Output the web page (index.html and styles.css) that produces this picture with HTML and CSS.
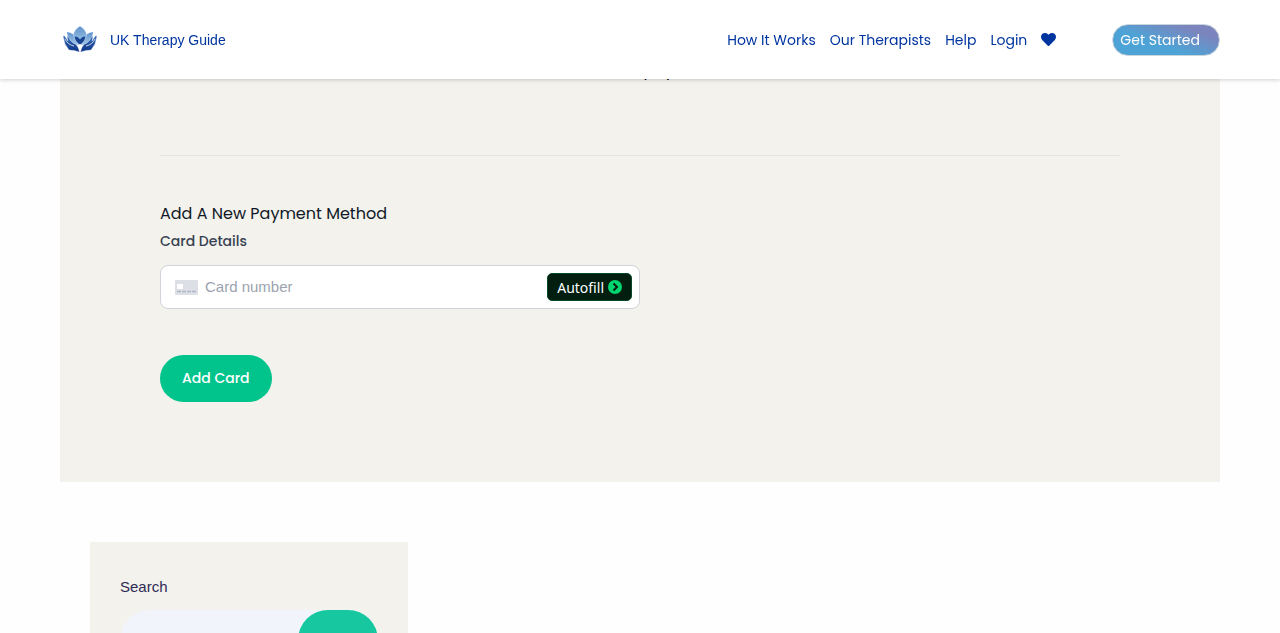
FILE: index.html
```html
<!DOCTYPE html>
<html lang="en">
  <head>
    <meta charset="UTF-8" />
    <meta name="viewport" content="width=device-width, initial-scale=1.0" />
    <title>UK Therapy Guide</title>
    <link rel="stylesheet" href="styles.css">
  </head>
  <body>
    <header class="header">
      <a href="#" class="brand">
        <svg class="logo" viewBox="0 0 36 28" aria-hidden="true">
          <defs>
            <linearGradient id="petal" x1="0" y1="0" x2="0" y2="1">
              <stop offset="0" stop-color="#5d92cc" />
              <stop offset="1" stop-color="#a3c9e8" />
            </linearGradient>
            <linearGradient id="hand" x1="0" y1="0" x2="0" y2="1">
              <stop offset="0" stop-color="#3f74bb" />
              <stop offset="1" stop-color="#0b3287" />
            </linearGradient>
          </defs>
          <path fill="url(#petal)" d="M5 6 Q12 7 15.500 13 L17.500 19 Q9 19 6 12z" />
          <path fill="url(#petal)" d="M31 6 Q24 7 20.500 13 L18.500 19 Q27 19 30 12z" />
          <path fill="url(#petal)" stroke="#fff" stroke-width=".4" d="M18 0 Q11.500 4 11.500 9 Q12 14 18 18 Q24 14 24.500 9 Q24.500 4 18 0z" />
          <path fill="#174391" d="M12.500 10.500 Q16 10.500 18 13.500 Q20 10.500 23.500 10.500 Q22.500 16 18 18.500 Q13.500 16 12.500 10.500z" />
          <path fill="url(#hand)" stroke="#fff" stroke-width=".3" d="M1 10 Q3 9 4 12 L6 15 L5 11 Q7 10 8 14 L11 17 Q16 18 17.500 26 Q12 24 7 24 Q5 21 3 18z" />
          <path fill="url(#hand)" stroke="#fff" stroke-width=".3" d="M35 10 Q33 9 32 12 L30 15 L31 11 Q29 10 28 14 L25 17 Q20 18 18.500 26 Q24 24 29 24 Q31 21 33 18z" />
          <path fill="none" stroke="#fff" stroke-width=".7" d="M3 13 Q6 19 12 20 M33 13 Q30 19 24 20" />
        </svg>
        <span>UK Therapy Guide</span>
      </a>
      <nav class="nav">
        <a href="#">How It Works</a>
        <a href="#">Our Therapists</a>
        <a href="#">Help</a>
        <a href="#">Login</a>
        <a href="#" aria-label="Favourites">
          <svg class="heart" viewBox="0 0 512 512" aria-hidden="true">
            <path fill="currentColor" d="M462 62c-55-46-136-38-186 14l-20 20-20-20C186 24 105 16 50 62c-63 54-66 150-10 208l193 199c13 13 33 13 46 0l193-199c56-58 53-154-10-208z" />
          </svg>
        </a>
        <a href="#" class="btn-start">Get Started</a>
      </nav>
    </header>

    <main>
      <section class="payment">
        <p class="notice">You have no saved payment methods</p>
        <hr>
        <form class="card-form">
          <h2>Add A New Payment Method</h2>
          <label for="cardNumber">Card Details</label>
          <div class="card-field">
            <svg class="card-icon" viewBox="0 0 23 15" aria-hidden="true">
              <rect width="23" height="15" rx="1" fill="#dcdfe6" />
              <rect x="2" y="4" width="6" height="5" rx="1" fill="#fff" />
              <path stroke="#b0b6c6" stroke-width="1.500" d="M2 11.500h4M7 11.500h4M12 11.500h4M17 11.500h4" />
            </svg>
            <input type="text" id="cardNumber" placeholder="Card number">
            <button type="button" class="btn-autofill">
              Autofill
              <svg viewBox="0 0 14 14" aria-hidden="true">
                <circle cx="7" cy="7" r="7" fill="#00d66f" />
                <path fill="none" stroke="#011e0f" stroke-width="2" d="M5.500 3.500L9 7l-3.500 3.500" />
              </svg>
            </button>
          </div>
          <button type="submit" class="btn-add">Add Card</button>
        </form>
      </section>

      <aside class="search">
        <label for="search">Search</label>
        <form class="search-form">
          <input type="search" id="search">
          <button type="submit" aria-label="Search"></button>
        </form>
      </aside>
    </main>
  </body>
</html>
```

FILE: styles.css
```css
* {
  box-sizing: border-box;
}

body {
  margin: 0;
  background: #fefefe;
  color: #111827;
  font-family: Poppins, Inter, sans-serif;
  font-size: 14px;
}

a {
  color: #0035a0;
  text-decoration: none;
}

button,
input {
  border: 0;
  font-family: inherit;
}

.header {
  position: fixed;
  top: 0;
  left: 0;
  right: 0;
  z-index: 10;
  display: flex;
  align-items: center;
  justify-content: space-between;
  height: 79px;
  padding: 0 60px;
  background: #fff;
  box-shadow: 0 1px 4px rgba(0, 0, 0, 0.18);
}

.brand {
  display: flex;
  align-items: center;
  gap: 12px;
  padding-left: 2px;
  font-family: "Liberation Sans", Arial, sans-serif;
}

.logo {
  width: 36px;
  height: 28px;
}

.nav {
  display: flex;
  align-items: center;
  gap: 14px;
  line-height: 22px;
}

.heart {
  display: block;
  width: 15px;
  height: 15px;
}

.btn-start {
  margin-left: 42px;
  padding: 0 19px 0 7px;
  border: 1px solid #c9d5dc;
  border-radius: 16px;
  background: linear-gradient(20deg, #4ea3d6 40%, #7c84bd 80%);
  color: #fff;
  line-height: 30px;
}

.payment {
  margin: 0 60px;
  padding: 56px 100px 80px;
  background: #f3f2ec;
}

.notice {
  margin: 0;
  color: #000;
  font-size: 16px;
  line-height: 30px;
  text-align: center;
}

hr {
  margin: 69px 0 45px;
  border: 0;
  border-top: 1px solid #e6e6e2;
}

.card-form h2 {
  margin: 0;
  font-size: 16px;
  font-weight: 400;
  line-height: 26px;
}

.card-form label {
  display: block;
  color: #374151;
  font-weight: 500;
  line-height: 28px;
}

.card-field {
  display: flex;
  align-items: center;
  gap: 7px;
  width: 50%;
  height: 44px;
  margin: 10px 0 46px;
  padding: 0 7px 0 14px;
  border: 1px solid #d1d5db;
  border-radius: 8px;
  background: #fff;
}

.card-icon {
  width: 23px;
  height: 15px;
}

.card-field input {
  flex: 1;
  min-width: 0;
  padding: 0 0 2px;
  font-family: "Liberation Sans", Arial, sans-serif;
  font-size: 15px;
}

.card-field input::placeholder {
  color: #9ca3af;
}

.btn-autofill {
  display: flex;
  align-items: center;
  gap: 4px;
  height: 28px;
  padding: 0 9px;
  border: 1px solid #044a28;
  border-radius: 5px;
  background: #011e0f;
  color: #fff;
  font-family: "Noto Sans", sans-serif;
  font-size: 14px;
}

.btn-autofill svg {
  width: 14px;
  height: 14px;
}

.btn-add {
  height: 47px;
  padding: 0 22px;
  border-radius: 24px;
  background: #00c48c;
  color: #fff;
  font-size: 14px;
  font-weight: 500;
}

.search {
  width: 318px;
  margin: 60px 90px;
  padding: 30px;
  background: #f3f2ec;
  color: #2e2a55;
  font-family: "Liberation Sans", Arial, sans-serif;
  font-size: 15px;
}

.search label {
  display: block;
  line-height: 30px;
}

.search-form {
  display: flex;
  height: 60px;
  margin-top: 8px;
  border-radius: 30px;
  background: #f1f5fb;
}

.search-form input {
  flex: 1;
  min-width: 0;
  padding: 0 20px;
  background: none;
}

.search-form button {
  width: 80px;
  border-radius: 30px;
  background: #17c7a0;
}
```
